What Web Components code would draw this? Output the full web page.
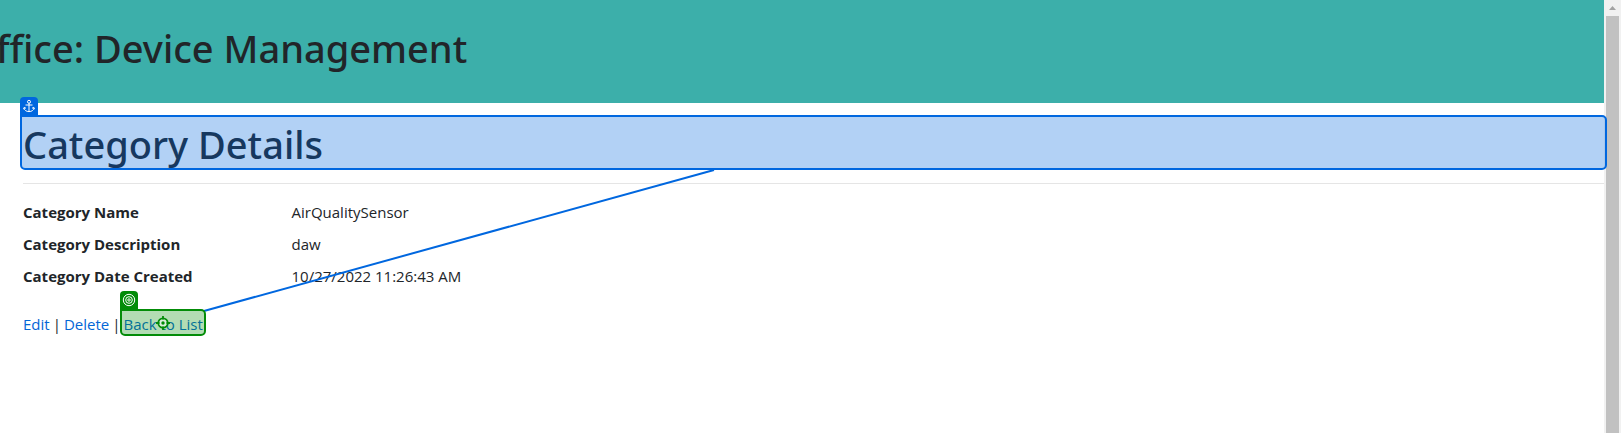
<!DOCTYPE html>
<html lang="en">
<head>
<meta charset="utf-8">
<title>Category Details</title>
<style>
body { margin: 0; background: #fff; color: #212529; font: 15px/24px "Open Sans", "Noto Sans", sans-serif; }
</style>
</head>
<body>
<device-page></device-page>

<template id="t-page">
  <style>
    :host { display: flex; position: relative; min-height: 100vh; overflow: hidden; }
    .content { flex: 1; min-width: 0; }
    main { padding: 17px 0 0 23px; }
    hr { margin: 15px 0 16px; border: 0; border-top: 1px solid #e5e5e5; }
    .connector { position: absolute; left: 0; top: 0; width: 100%; height: 100%; pointer-events: none; }
    nav { display: flex; gap: 3px; margin-top: 24px; }
    a { color: #0366d6; text-decoration: none; }
    h1 { margin: 0; font: 500 38px/48px "Noto Sans", sans-serif; }
  </style>
  <div class="content">
    <site-header>ffice: Device Management</site-header>
    <main>
      <target-mark kind="anchor"><h1>Category Details</h1></target-mark>
      <hr>
      <detail-list></detail-list>
      <nav>
        <a href="#edit">Edit</a><span>|</span><a href="#delete">Delete</a><span>|</span>
        <target-mark kind="target"><a href="#list">Back to List</a></target-mark>
      </nav>
    </main>
  </div>
  <scroll-rail></scroll-rail>
  <svg class="connector" aria-hidden="true"><path d="M204 311 714 170" stroke="#0067df" stroke-width="2" fill="none"/></svg>
</template>

<template id="t-header">
  <style>
    :host { display: block; padding: 24px 0 31px; background: #3cafaa; }
    h1 { margin: 0 0 0 -4px; font: 500 38px/48px "Noto Sans", sans-serif; white-space: nowrap; }
  </style>
  <h1><slot></slot></h1>
</template>

<template id="t-mark">
  <style>
    :host { display: block; position: relative; --line: #0067df; --fill: rgba(0, 103, 223, .3); }
    :host([kind="target"]) { --line: #038c08; --fill: rgba(3, 140, 8, .3); }
    .box { position: absolute; inset: -5px -3px -2px; border: 2px solid var(--line); border-radius: 0 5px 5px 5px; background: var(--fill); pointer-events: none; z-index: 1; }
    :host([kind="target"]) .box { inset: -3px -3px 0; }
    .tag { position: absolute; left: -2px; bottom: 100%; width: 18px; height: 20px; border-radius: 4px 4px 0 0; background: var(--line); }
    svg { display: block; fill: none; stroke: #fff; }
    .cross { position: absolute; inset: 0; margin: auto; stroke: #038c08; }
    :host([kind="anchor"]) .bull, :host([kind="anchor"]) .cross, :host([kind="target"]) .anchor { display: none; }
  </style>
  <slot></slot>
  <div class="box" aria-hidden="true">
    <div class="tag">
      <svg class="anchor" width="18" height="18" viewBox="0 0 18 18"><circle cx="9" cy="4.8" r="1.5"/><path d="M9 6.300V14.600M5.500 8h7M4 11c.3 2.300 2.400 3.600 5 3.600s4.700-1.300 5-3.600M3.600 12.200 4.200 10.300 6 11.300M14.400 12.200 13.800 10.300 12 11.300"/></svg>
      <svg class="bull" width="18" height="18" viewBox="0 0 18 18"><circle cx="9" cy="9" r="5.700"/><circle cx="9" cy="9" r="3.300"/><circle cx="9" cy="9" r="1.200"/></svg>
    </div>
    <svg class="cross" width="14" height="14" viewBox="0 0 14 14"><circle cx="7" cy="7" r="4.700" fill="#d9eeda" stroke-width="1.800"/><path d="M7 0v3.500M7 10.500V14M0 7h3.500M10.500 7H14" stroke-width="1.800"/><circle cx="7" cy="7" r="1.700" fill="#038c08" stroke="none"/></svg>
  </div>
</template>

<template id="t-list">
  <style>
    :host { display: block; }
    dl { display: grid; grid-template-columns: 1fr 5fr; column-gap: 6px; row-gap: 8px; margin: 0; }
    dt { font-weight: 700; white-space: nowrap; }
    dd { margin: 0; }
  </style>
  <dl>
    <dt>Category Name</dt><dd>AirQualitySensor</dd>
    <dt>Category Description</dt><dd>daw</dd>
    <dt>Category Date Created</dt><dd>10/27/2022 11:26:43 AM</dd>
  </dl>
</template>

<template id="t-rail">
  <style>
    :host { display: flex; flex-direction: column; box-sizing: border-box; width: 17px; padding: 0 2px; background: #f1f1f1; }
    svg { display: block; height: 16px; width: 13px; }
    .thumb { flex: 1; background: #c1c1c1; }
  </style>
  <svg viewBox="0 0 13 16" aria-hidden="true"><path d="M3 10 6.500 6 10 10Z" fill="#a3a3a3"/></svg>
  <div class="thumb"></div>
</template>

<script>
const define = (name, id) => customElements.define(name, class extends HTMLElement {
  constructor() {
    super();
    this.attachShadow({ mode: "open" }).append(document.getElementById(id).content.cloneNode(true));
  }
});
define("site-header", "t-header");
define("target-mark", "t-mark");
define("detail-list", "t-list");
define("scroll-rail", "t-rail");
define("device-page", "t-page");
</script>
</body>
</html>
